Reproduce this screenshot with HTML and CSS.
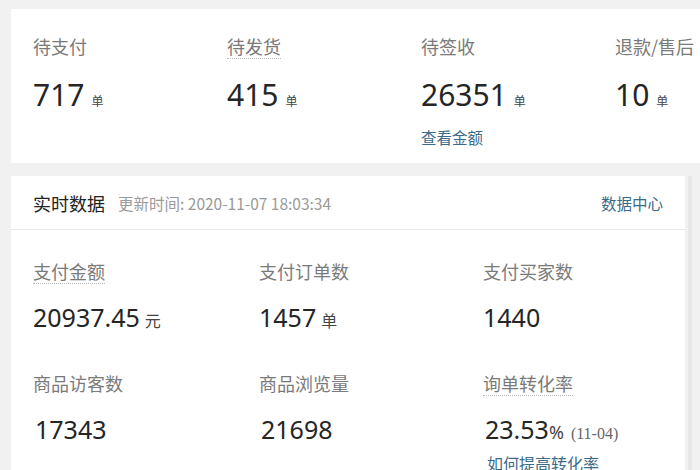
FILE: index.html
```html
<!DOCTYPE html>
<html lang="zh-CN">
<head>
<meta charset="utf-8">
<link rel="stylesheet" href="styles.css">
</head>
<body>
<div class="page">
  <section class="card orders">
    <div class="stat">
      <div class="label"><span>待支付</span></div>
      <div class="value">717<small>单</small></div>
    </div>
    <div class="stat">
      <div class="label"><span class="dotted">待发货</span></div>
      <div class="value">415<small>单</small></div>
    </div>
    <div class="stat">
      <div class="label"><span>待签收</span></div>
      <div class="value">26351<small>单</small></div>
      <a class="link">查看金额</a>
    </div>
    <div class="stat">
      <div class="label"><span>退款/售后</span></div>
      <div class="value">10<small>单</small></div>
    </div>
  </section>

  <div class="lower">
    <section class="card realtime">
      <header class="rt-head">
        <h2>实时数据</h2>
        <span class="updated">更新时间: 2020-11-07 18:03:34</span>
        <a class="link center">数据中心</a>
      </header>
      <div class="rt-body">
        <div class="stat2">
          <div class="label"><span class="dotted">支付金额</span></div>
          <div class="value2">20937.45<small>元</small></div>
        </div>
        <div class="stat2">
          <div class="label"><span>支付订单数</span></div>
          <div class="value2">1457<small>单</small></div>
        </div>
        <div class="stat2">
          <div class="label"><span>支付买家数</span></div>
          <div class="value2">1440</div>
        </div>
        <div class="stat2 row2">
          <div class="label"><span>商品访客数</span></div>
          <div class="value2">17343</div>
        </div>
        <div class="stat2 row2">
          <div class="label"><span>商品浏览量</span></div>
          <div class="value2">21698</div>
        </div>
        <div class="stat2 row2">
          <div class="label"><span class="dotted">询单转化率</span></div>
          <div class="value2 rate">23.53<span class="pct">%</span><span class="date">(11-04)</span></div>
          <a class="link small">如何提高转化率</a>
        </div>
      </div>
    </section>
    <div class="rail"></div>
  </div>
</div>
</body>
</html>
```

FILE: styles.css
```css
html, body {
  margin: 0;
  padding: 0;
}
body {
  background: #f1f1f1;
  font-family: "Noto Sans CJK SC", "Noto Sans", sans-serif;
  color: #333;
  width: 700px;
  height: 470px;
  overflow: hidden;
}
.page {
  padding-top: 9px;
}
.card {
  background: #fff;
}
.orders {
  margin-left: 11px;
  padding: 25px 0 22px 22px;
  display: grid;
  grid-template-columns: 194px 194px 194px 1fr;
  height: 107px;
  box-sizing: content-box;
  overflow: hidden;
}
.label {
  font-size: 18px;
  line-height: 24px;
  height: 24px;
  color: #7a7a7a;
  white-space: nowrap;
}
.label span {
  display: inline-block;
}
.label .dotted {
  line-height: 22px;
  border-bottom: 1px dotted #b8b8b8;
  padding-bottom: 1px;
}
.value {
  margin-top: 19px;
  font-family: "Noto Sans", "Noto Sans CJK SC", sans-serif;
  font-size: 30px;
  line-height: 36px;
  color: #252525;
  white-space: nowrap;
}
.value small {
  font-family: "Noto Sans CJK SC", sans-serif;
  font-size: 12px;
  margin-left: 7px;
  color: #444;
}
.link {
  display: block;
  color: #3b6b8a;
  font-size: 15.5px;
  line-height: 20px;
  margin-top: 8px;
  white-space: nowrap;
}
.lower {
  display: flex;
  margin-top: 13px;
  margin-left: 11px;
}
.realtime {
  width: 674px;
  flex: none;
}
.rail {
  width: 4px;
  margin-left: 3px;
  background: #e6e8e8;
  height: 300px;
}
.rt-head {
  height: 53px;
  border-bottom: 1px solid #e8e8e8;
  display: flex;
  align-items: center;
  padding: 0 22px;
}
.rt-head h2 {
  margin: 0;
  font-size: 18px;
  font-weight: normal;
  color: #222;
  line-height: 24px;
}
.updated {
  margin-left: 13px;
  font-size: 15.5px;
  color: #9a9a9a;
}
.link.center {
  margin: 0 0 0 auto;
  font-size: 15.5px;
}
.rt-body {
  padding: 29px 0 0 22px;
  display: grid;
  grid-template-columns: 226px 224px 224px;
}
.stat2.row2 {
  margin-top: 33px;
}
.value2 {
  margin-top: 16px;
  font-family: "Noto Sans", "Noto Sans CJK SC", sans-serif;
  font-size: 25px;
  line-height: 36px;
  color: #252525;
  white-space: nowrap;
}
.value2 small {
  font-family: "Noto Sans CJK SC", sans-serif;
  font-size: 16px;
  margin-left: 5px;
  color: #444;
}
.row2 .value2 {
  margin-left: 2px;
}
.rate {
  margin-left: 5px;
}
.pct {
  font-size: 18px;
  color: #444;
}
.date {
  font-family: "Liberation Serif", serif;
  font-size: 16px;
  color: #666;
  margin-left: 7px;
}
.link.small {
  margin-top: 1px;
  font-size: 16px;
  margin-left: 4px;
}
```
